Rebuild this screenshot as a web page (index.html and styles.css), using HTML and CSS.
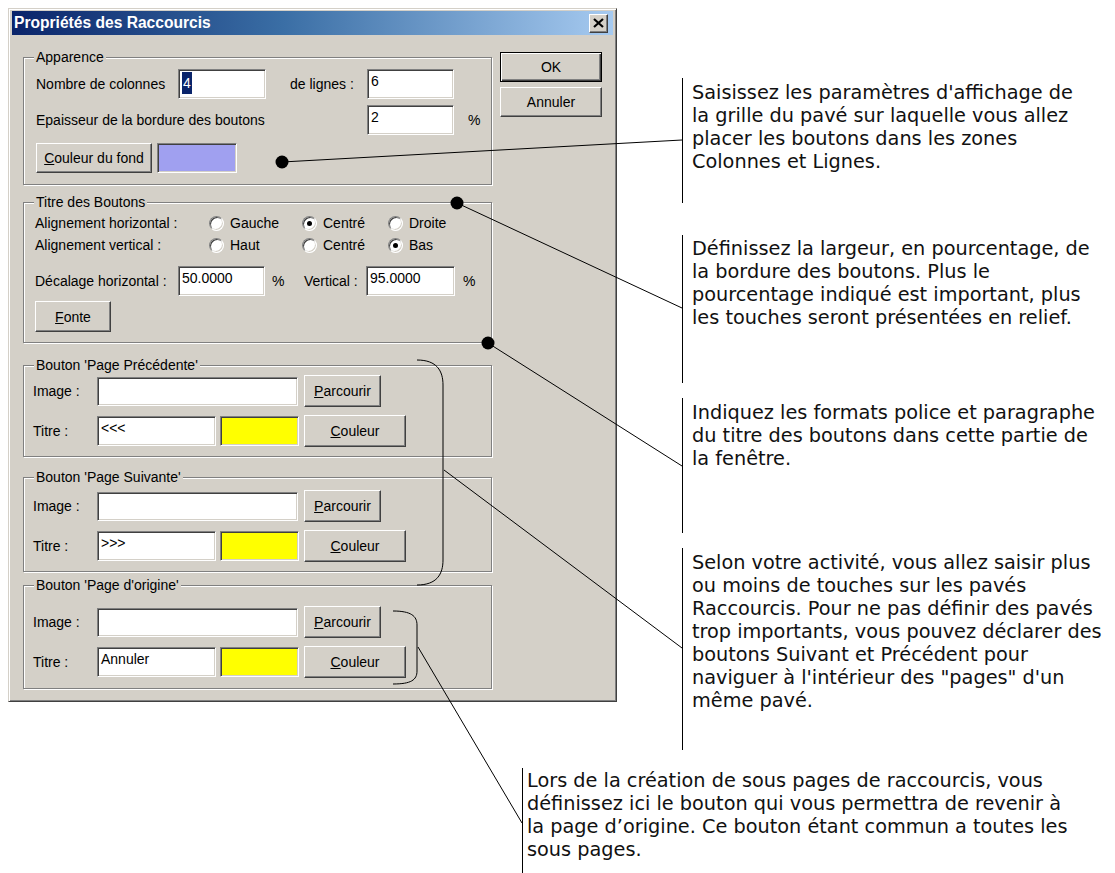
FILE: index.html
```html
<!DOCTYPE html>
<html lang="fr">
<head>
<meta charset="utf-8">
<title>Propriétés des Raccourcis</title>
<link rel="stylesheet" href="styles.css">
</head>
<body>
<div class="page">
  <div class="dialog">
    <div class="titlebar">
      <span class="title">Propriétés des Raccourcis</span>
      <span class="close"><svg width="11" height="10" viewBox="0 0 11 10"><path d="M1 1 L10 9 M10 1 L1 9" stroke="#000" stroke-width="2.2" fill="none"/></svg></span>
    </div>
    <div class="body">
      <div class="left">
        <div class="group g-app">
          <span class="gtitle">Apparence</span>
          <div class="row">
            <span class="lbl w-nb">Nombre de colonnes</span>
            <span class="field w88"><span class="sel">4</span></span>
            <span class="lbl w-lig">de lignes :</span>
            <span class="field w87">6</span>
          </div>
          <div class="row mt6">
            <span class="lbl w-ep">Epaisseur de la bordure des boutons</span>
            <span class="field w87">2</span>
            <span class="pct">%</span>
          </div>
          <div class="row mt8">
            <span class="btn w116"><span><u>C</u>ouleur du fond</span></span>
            <span class="swatch purple"></span>
          </div>
        </div>

        <div class="group g-titre">
          <span class="gtitle">Titre des Boutons</span>
          <div class="row r20">
            <span class="lbl w-al">Alignement horizontal :</span>
            <span class="opt o1"><span class="radio"></span>Gauche</span>
            <span class="opt o2"><span class="radio on"></span>Centré</span>
            <span class="opt"><span class="radio"></span>Droite</span>
          </div>
          <div class="row r20 mt2">
            <span class="lbl w-al">Alignement vertical :</span>
            <span class="opt o1"><span class="radio"></span>Haut</span>
            <span class="opt o2"><span class="radio"></span>Centré</span>
            <span class="opt"><span class="radio on"></span>Bas</span>
          </div>
          <div class="row mt11">
            <span class="lbl w-dec">Décalage horizontal :</span>
            <span class="field w87">50.0000</span>
            <span class="pct2">%</span>
            <span class="lbl w-ver">Vertical :</span>
            <span class="field w89">95.0000</span>
            <span class="pct3">%</span>
          </div>
          <div class="row mt5">
            <span class="btn w76 h31"><span><u>F</u>onte</span></span>
          </div>
        </div>

        <div class="group g-btn g-prec">
          <span class="gtitle">Bouton 'Page Précédente'</span>
          <div class="row r32">
            <span class="lbl w-img">Image :</span>
            <span class="field w201 h29"></span>
            <span class="btn w77 h32 ml6"><span><u>P</u>arcourir</span></span>
          </div>
          <div class="row r32 mt8">
            <span class="lbl w-img">Titre :</span>
            <span class="field w119">&lt;&lt;&lt;</span>
            <span class="swatch yellow"></span>
            <span class="btn w102 h32 ml5"><span><u>C</u>ouleur</span></span>
          </div>
        </div>

        <div class="group g-btn g-suiv">
          <span class="gtitle">Bouton 'Page Suivante'</span>
          <div class="row r32">
            <span class="lbl w-img">Image :</span>
            <span class="field w201 h29"></span>
            <span class="btn w77 h32 ml6"><span><u>P</u>arcourir</span></span>
          </div>
          <div class="row r32 mt8">
            <span class="lbl w-img">Titre :</span>
            <span class="field w119">&gt;&gt;&gt;</span>
            <span class="swatch yellow"></span>
            <span class="btn w102 h32 ml5"><span><u>C</u>ouleur</span></span>
          </div>
        </div>

        <div class="group g-btn g-orig">
          <span class="gtitle">Bouton 'Page d'origine'</span>
          <div class="row r32">
            <span class="lbl w-img">Image :</span>
            <span class="field w201 h29"></span>
            <span class="btn w77 h32 ml6"><span><u>P</u>arcourir</span></span>
          </div>
          <div class="row r32 mt8">
            <span class="lbl w-img">Titre :</span>
            <span class="field w119">Annuler</span>
            <span class="swatch yellow"></span>
            <span class="btn w102 h32 ml5"><span><u>C</u>ouleur</span></span>
          </div>
        </div>
      </div>

      <div class="right">
        <span class="btn default">OK</span>
        <span class="btn">Annuler</span>
      </div>
    </div>
  </div>

  <div class="note n1">Saisissez les paramètres d'affichage de<br>la grille du pavé sur laquelle vous allez<br>placer les boutons dans les zones<br>Colonnes et Lignes.</div>
  <div class="note n2">Définissez la largeur, en pourcentage, de<br>la bordure des boutons. Plus le<br>pourcentage indiqué est important, plus<br>les touches seront présentées en relief.</div>
  <div class="note n3">Indiquez les formats police et paragraphe<br>du titre des boutons dans cette partie de<br>la fenêtre.</div>
  <div class="note n4">Selon votre activité, vous allez saisir plus<br>ou moins de touches sur les pavés<br>Raccourcis. Pour ne pas définir des pavés<br>trop importants, vous pouvez déclarer des<br>boutons Suivant et Précédent pour<br>naviguer à l'intérieur des "pages" d'un<br>même pavé.</div>
  <div class="note n5">Lors de la création de sous pages de raccourcis, vous<br>définissez ici le bouton qui vous permettra de revenir à<br>la page d’origine. Ce bouton étant commun a toutes les<br>sous pages.</div>

  <svg class="leaders" width="1115" height="873" viewBox="0 0 1115 873">
    <g stroke="#000" stroke-width="1" fill="none">
      <line x1="282" y1="162" x2="682" y2="140"/>
      <line x1="457" y1="203" x2="682" y2="308"/>
      <line x1="488" y1="343" x2="682" y2="466"/>
      <path d="M417 360 C437 360 443 371 443 385 L443 560 C443 574 437 585 417 585"/>
      <line x1="444" y1="470" x2="682" y2="648"/>
      <path d="M393 611 C411 611 417 616 417 625 L417 671 C417 680 411 684 393 684"/>
      <line x1="418" y1="647" x2="522" y2="823"/>
    </g>
    <g fill="#000">
      <circle cx="282" cy="162" r="6.5"/>
      <circle cx="457" cy="203" r="6.5"/>
      <circle cx="488" cy="343" r="6.5"/>
    </g>
  </svg>
</div>
</body>
</html>
```

FILE: styles.css
```css
html, body {
  margin: 0;
  background: #fff;
}

.page {
  position: relative;
  width: 1115px;
  height: 873px;
  padding: 8px;
  box-sizing: border-box;
  overflow: hidden;
  font-family: "Liberation Sans", Arial, sans-serif;
  font-size: 14px;
  color: #000;
}

/* ---------- dialog frame ---------- */
.dialog {
  width: 609px;
  height: 694px;
  box-sizing: border-box;
  background: #d4d0c8;
  border: 1px solid;
  border-color: #d4d0c8 #404040 #404040 #d4d0c8;
  box-shadow: inset 1px 1px #fff, inset -1px -1px #808080;
  padding: 2px 3px 3px 3px;
}

.titlebar {
  height: 24px;
  background: linear-gradient(to right, #0a246a 0%, #3a6ea5 45%, #a6caf0 100%);
  display: flex;
  align-items: center;
  justify-content: space-between;
  padding: 0 5px 0 2px;
}

.title {
  color: #fff;
  font-weight: bold;
  font-size: 15.6px;
  line-height: 18px;
}

.close {
  width: 19px;
  height: 19px;
  box-sizing: border-box;
  background: #d4d0c8;
  border: 1px solid;
  border-color: #fff #404040 #404040 #fff;
  box-shadow: inset -1px -1px #808080;
  display: flex;
  align-items: center;
  justify-content: center;
}

.body {
  display: flex;
  gap: 8px;
  padding: 17px 0 0 11px;
}

.left {
  width: 469px;
  margin-top: 5px;
  display: flex;
  flex-direction: column;
}

.right {
  width: 102px;
  display: flex;
  flex-direction: column;
  gap: 5px;
}

/* ---------- group boxes ---------- */
.group {
  position: relative;
  box-sizing: border-box;
  border: 1px solid #808080;
  box-shadow: inset 1px 1px #fff, 1px 1px #fff;
}

.gtitle {
  position: absolute;
  top: -9px;
  left: 10px;
  padding: 0 2px;
  background: #d4d0c8;
  line-height: 16px;
  white-space: nowrap;
}

.g-app {
  height: 128px;
  padding: 11px 0 0 12px;
}

.g-titre {
  height: 141px;
  margin-top: 17px;
  padding: 10px 0 0 11px;
}

.g-btn {
  padding-left: 9px;
}

.g-prec {
  height: 92px;
  margin-top: 22px;
  padding-top: 9px;
}

.g-suiv {
  height: 95px;
  margin-top: 20px;
  padding-top: 12px;
}

.g-orig {
  height: 104px;
  margin-top: 13px;
  padding-top: 20px;
}

/* ---------- rows ---------- */
.row {
  display: flex;
  align-items: center;
  white-space: nowrap;
}

.r20 { height: 20px; }
.r32 { height: 32px; }
.mt2 { margin-top: 2px; }
.mt5 { margin-top: 5px; }
.mt6 { margin-top: 6px; }
.mt8 { margin-top: 8px; }
.mt11 { margin-top: 11px; }
.ml5 { margin-left: 5px; }
.ml6 { margin-left: 6px; }

.lbl { display: block; line-height: 16px; }
.w-nb { width: 142px; }
.w-lig { width: 77px; margin-left: 24px; }
.w-ep { width: 331px; }
.w-al { width: 174px; }
.w-dec { width: 143px; }
.w-ver { width: 62px; }
.w-img { width: 64px; }

.pct { margin-left: 14px; }
.pct2 { width: 32px; margin-left: 7px; }
.pct3 { margin-left: 8px; }

/* ---------- edit fields ---------- */
.field {
  box-sizing: border-box;
  height: 30px;
  background: #fff;
  border: 1px solid;
  border-color: #808080 #fff #fff #808080;
  box-shadow: inset 1px 1px #404040, inset -1px -1px #d4d0c8;
  padding: 2px 3px 0 3px;
  line-height: 18px;
  display: flex;
  align-items: flex-start;
}

.w87 { width: 87px; }
.w88 { width: 88px; }
.w89 { width: 89px; }
.w119 { width: 119px; }
.w201 { width: 201px; }
.h29 { height: 29px; }

.sel {
  background: #0a246a;
  color: #fff;
  line-height: 22px;
  padding: 0 1px;
  margin-top: 0;
}

.swatch {
  box-sizing: border-box;
  height: 30px;
  border: 1px solid;
  border-color: #808080 #fff #fff #808080;
  box-shadow: inset 1px 1px #404040, inset -1px -1px #d4d0c8;
}

.purple {
  width: 80px;
  margin-left: 5px;
  background: #a0a0f0;
}

.yellow {
  width: 79px;
  margin-left: 4px;
  background: #ffff00;
}

/* ---------- radios ---------- */
.opt {
  display: flex;
  align-items: center;
  gap: 6px;
  line-height: 16px;
}

.o1 { width: 93px; }
.o2 { width: 86px; }

.radio {
  position: relative;
  width: 15px;
  height: 15px;
  box-sizing: border-box;
  border-radius: 50%;
  background: #fff;
  border: 1px solid;
  border-color: #808080 #fff #fff #808080;
  box-shadow: inset 1px 1px #404040, inset -1px -1px #d4d0c8;
  flex: none;
}

.radio.on::after {
  content: "";
  position: absolute;
  left: 4px;
  top: 4px;
  width: 5px;
  height: 5px;
  border-radius: 50%;
  background: #000;
}

/* ---------- push buttons ---------- */
.btn {
  box-sizing: border-box;
  height: 30px;
  background: #d4d0c8;
  border: 1px solid;
  border-color: #fff #404040 #404040 #fff;
  box-shadow: inset -1px -1px #808080;
  display: flex;
  align-items: center;
  justify-content: center;
  line-height: 16px;
  white-space: nowrap;
}

.btn.default {
  border-color: #000;
  box-shadow: inset 1px 1px #fff, inset -1px -1px #404040, inset -2px -2px #808080;
}

.w76 { width: 76px; }
.w77 { width: 77px; }
.w102 { width: 102px; }
.w116 { width: 116px; }
.h31 { height: 31px; }
.h32 { height: 32px; }

/* ---------- annotations ---------- */
.note {
  position: absolute;
  box-sizing: border-box;
  border-left: 1px solid #000;
  padding-left: 9px;
  font-family: "DejaVu Sans", Verdana, sans-serif;
  font-size: 19.3px;
  line-height: 23px;
  color: #111;
  white-space: nowrap;
}

.n1 { left: 682px; top: 78px; height: 125px; padding-top: 3px; }
.n2 { left: 682px; top: 235px; height: 148px; padding-top: 2px; }
.n3 { left: 682px; top: 398px; height: 135px; padding-top: 3px; }
.n4 { left: 682px; top: 548px; height: 202px; padding-top: 3px; }
.n5 { left: 522px; top: 768px; height: 105px; padding-top: 1px; padding-left: 4px; }

.leaders {
  position: absolute;
  left: 0;
  top: 0;
  pointer-events: none;
}
```
